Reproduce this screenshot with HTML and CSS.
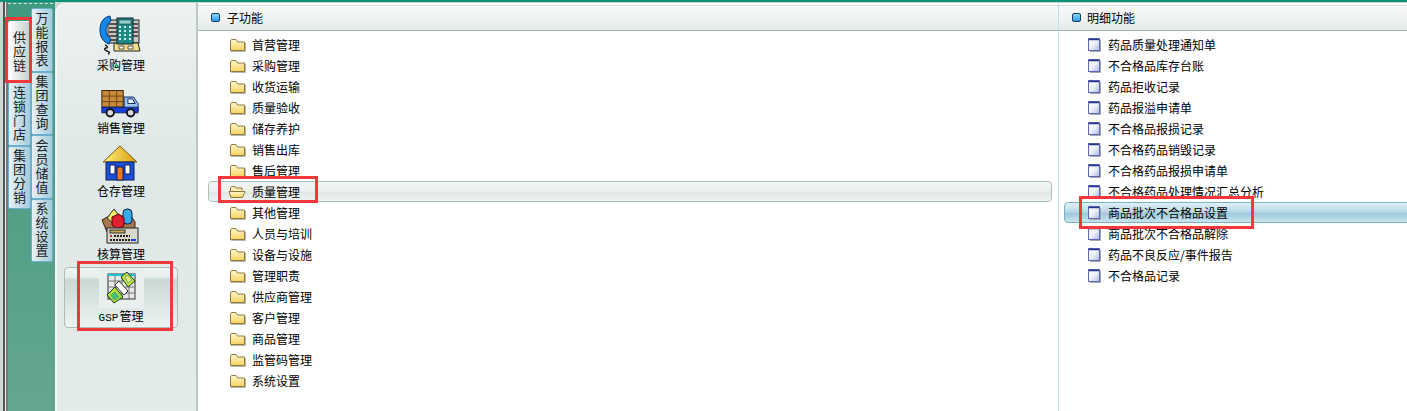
FILE: index.html
```html
<!DOCTYPE html>
<html lang="zh-CN">
<head>
    <meta charset="UTF-8">
    <title>GSP管理</title>
    <link rel="stylesheet" href="styles.css">
</head>
<body>

    <svg class="defs" width="0" height="0">
        <defs>
            <linearGradient id="gFolder" x1="0" y1="0" x2="0" y2="1">
                <stop offset="0" stop-color="#fff9cf"/>
                <stop offset="1" stop-color="#f6d260"/>
            </linearGradient>
            <linearGradient id="gDoc" x1="0" y1="0" x2="1" y2="1">
                <stop offset="0" stop-color="#ffffff"/>
                <stop offset=".5" stop-color="#eef1fb"/>
                <stop offset="1" stop-color="#a8b6ea"/>
            </linearGradient>
            <linearGradient id="gRoof" x1="0" y1="0" x2="1" y2="0">
                <stop offset="0" stop-color="#fff27a"/>
                <stop offset="1" stop-color="#d99a10"/>
            </linearGradient>
            <symbol id="folder" viewBox="0 0 16 14">
                <path d="M.5 3V12.5H14.5V4H7.5L6 1.5H1.5Z" fill="url(#gFolder)" stroke="#8f7a3c"/>
                <path d="M1 13.5H15.5V5" fill="none" stroke="#8c8778" stroke-opacity=".6"/>
            </symbol>
            <symbol id="folderOpen" viewBox="0 0 18 14">
                <path d="M2.5 11V2.5L3.5 1.5H7L8 3H14V5.5" fill="#fbeeb0" stroke="#8f7a3c"/>
                <path d="M1 6.5H17L14.5 12.5H3Z" fill="url(#gFolder)" stroke="#8f7a3c"/>
            </symbol>
            <symbol id="doc" viewBox="0 0 13 14">
                <rect x=".5" y=".5" width="11" height="12" fill="url(#gDoc)" stroke="#5f68b4"/>
                <path d="M1 1.5H11" stroke="#26348c" stroke-width="1.5"/>
                <path d="M12.5 2V13.5H2" fill="none" stroke="#a8a8b0"/>
            </symbol>
        </defs>
    </svg>

    <div class="app">
        <div class="tabs">
            <div class="tab-wrap">
                <div class="tab-col tab-col-a">
                    <div class="tab tab-on">供应链</div>
                    <div class="tab">连锁门店</div>
                    <div class="tab">集团分销</div>
                </div>
                <div class="tab-col tab-col-b">
                    <div class="tab">万能报表</div>
                    <div class="tab">集团查询</div>
                    <div class="tab">会员储值</div>
                    <div class="tab">系统设置</div>
                </div>
            </div>
        </div>

        <div class="main">
            <div class="side">
                <div class="mod">
                    <svg class="mod-icon" width="42" height="40" viewBox="0 0 42 40">
                        <rect x="9" y="5" width="31" height="23" fill="#c8c8c0" stroke="#222"/>
                        <path d="M10 9h9M10 13h9M10 17h9M10 21h9M10 25h9M31 9h8M31 13h8M31 17h8M31 21h8" stroke="#555" stroke-width="2"/>
                        <path d="M15 28H39L41 36H15Z" fill="#f5e08a" stroke="#222"/>
                        <path d="M20 31h5v3h-5zM29 31h5v3h-5z" fill="#fff" stroke="#554"/>
                        <rect x="18" y="3" width="16" height="26" fill="#1f8a86" stroke="#123"/>
                        <rect x="20" y="5" width="12" height="4" fill="#8fd0c8" stroke="#123" stroke-width=".5"/>
                        <path d="M20 12h2M25 12h2M30 12h2M20 16h2M25 16h2M30 16h2M20 20h2M25 20h2M30 20h2M20 24h2M25 24h2M30 24h2" stroke="#cdeee8" stroke-width="2"/>
                        <path d="M11 1C4 2 1 8 1 15S4 27 10 29L12 24C9 22 7 19 7 15S9 8 12 6Z" fill="#1488e8" stroke="#06357a"/>
                        <path d="M6 30c3 1 3 3 1 3s-2 2 1 3 3 2 1 3" fill="none" stroke="#222" stroke-width="1.5"/>
                    </svg>
                    <span class="mod-name">采购管理</span>
                </div>
                <div class="mod">
                    <svg class="mod-icon" width="39" height="29" viewBox="0 0 42 30">
                        <rect x="2" y="1" width="23" height="18" fill="#c98a3a" stroke="#2a1a08"/>
                        <path d="M2 7H25M2 13H25M10 1V19M18 1V19" stroke="#6a4214"/>
                        <path d="M26 8H36L41 15V23H26Z" fill="#9cc8f0" stroke="#0a1a60"/>
                        <path d="M30 10H35L38 15H30Z" fill="#e8f4ff" stroke="#0a1a60"/>
                        <path d="M2 19H41V25H2Z" fill="#1a3fd8" stroke="#0a1a60"/>
                        <circle cx="11" cy="25" r="4" fill="#d8d8d8" stroke="#111" stroke-width="2"/>
                        <circle cx="33" cy="25" r="4" fill="#d8d8d8" stroke="#111" stroke-width="2"/>
                    </svg>
                    <span class="mod-name">销售管理</span>
                </div>
                <div class="mod">
                    <svg class="mod-icon" width="36" height="36" viewBox="0 0 36 36">
                        <path d="M18 1L35 17H1Z" fill="url(#gRoof)" stroke="#7a5a10"/>
                        <rect x="4" y="17" width="28" height="18" fill="#1c50d8" stroke="#0a1a60"/>
                        <rect x="8" y="20" width="5" height="9" fill="#fff" stroke="#0a1a60"/>
                        <rect x="23" y="20" width="5" height="9" fill="#fff" stroke="#0a1a60"/>
                        <rect x="15" y="22" width="6" height="13" fill="#f07a18" stroke="#0a1a60"/>
                    </svg>
                    <span class="mod-name">仓存管理</span>
                </div>
                <div class="mod">
                    <svg class="mod-icon" width="38" height="36" viewBox="0 0 38 36">
                        <path d="M1 12L8 8L30 8L34 14V24H6Z" fill="#a8764e" stroke="#3a2210"/>
                        <path d="M6 10L13 1L19 9L13 16Z" fill="#f4ec60" stroke="#333"/>
                        <rect x="22" y="1" width="9" height="15" rx="4" fill="#38a8e8" stroke="#124"/>
                        <path d="M11 9L18 6L23 10V18L16 21L11 17Z" fill="#e02030" stroke="#501"/>
                        <rect x="6" y="20" width="31" height="15" fill="#d8d8cc" stroke="#222"/>
                        <rect x="9" y="22" width="15" height="3" fill="#c8a850" stroke="#333"/>
                        <path d="M9 28h2" stroke="#d22" stroke-width="2"/>
                        <path d="M13 28h16M9 32h20" stroke="#222" stroke-width="2" stroke-dasharray="2 1"/>
                        <path d="M30 32h5" stroke="#1a3fd8" stroke-width="2"/>
                    </svg>
                    <span class="mod-name">核算管理</span>
                </div>
                <div class="mod mod-on">
                    <div class="mod-glow">
                        <svg width="30" height="32" viewBox="0 0 30 32">
                            <rect x="2" y="2" width="27" height="25" fill="#e8e8e8" stroke="#333"/>
                            <path d="M2 3H29" stroke="#18c8d8" stroke-width="2"/>
                            <path d="M2 9H29M2 15H29M2 21H29M9 3V27M16 3V27M23 3V27" stroke="#777"/>
                            <path d="M15 5L21 0L29 9L22 15Z" fill="#c8e040" stroke="#142"/>
                            <path d="M19 5L22 3L26 8L22 11Z" fill="#f0f070" stroke="#5a8"/>
                            <path d="M1 23L9 15L17 25L8 31Z" fill="#b8dc30" stroke="#142"/>
                            <path d="M5 23L9 20L13 25L8 28Z" fill="#40c070" stroke="#5a8"/>
                            <path d="M9 13L13 9L22 19L18 23Z" fill="#fff" stroke="#333"/>
                        </svg>
                    </div>
                    <span class="mod-name"><span class="latin">GSP</span>管理</span>
                </div>
            </div>

            <div class="panel panel-sub">
                <div class="panel-head"><i class="dot"></i>子功能</div>
                <ul class="rows">
                    <li class="row"><svg class="ic-folder"><use href="#folder"/></svg>首营管理</li>
                    <li class="row"><svg class="ic-folder"><use href="#folder"/></svg>采购管理</li>
                    <li class="row"><svg class="ic-folder"><use href="#folder"/></svg>收货运输</li>
                    <li class="row"><svg class="ic-folder"><use href="#folder"/></svg>质量验收</li>
                    <li class="row"><svg class="ic-folder"><use href="#folder"/></svg>储存养护</li>
                    <li class="row"><svg class="ic-folder"><use href="#folder"/></svg>销售出库</li>
                    <li class="row"><svg class="ic-folder"><use href="#folder"/></svg>售后管理</li>
                    <li class="row row-on"><svg class="ic-open"><use href="#folderOpen"/></svg>质量管理</li>
                    <li class="row"><svg class="ic-folder"><use href="#folder"/></svg>其他管理</li>
                    <li class="row"><svg class="ic-folder"><use href="#folder"/></svg>人员与培训</li>
                    <li class="row"><svg class="ic-folder"><use href="#folder"/></svg>设备与设施</li>
                    <li class="row"><svg class="ic-folder"><use href="#folder"/></svg>管理职责</li>
                    <li class="row"><svg class="ic-folder"><use href="#folder"/></svg>供应商管理</li>
                    <li class="row"><svg class="ic-folder"><use href="#folder"/></svg>客户管理</li>
                    <li class="row"><svg class="ic-folder"><use href="#folder"/></svg>商品管理</li>
                    <li class="row"><svg class="ic-folder"><use href="#folder"/></svg>监管码管理</li>
                    <li class="row"><svg class="ic-folder"><use href="#folder"/></svg>系统设置</li>
                </ul>
            </div>

            <div class="panel panel-detail">
                <div class="panel-head"><i class="dot"></i>明细功能</div>
                <ul class="rows">
                    <li class="row"><svg class="ic-doc"><use href="#doc"/></svg>药品质量处理通知单</li>
                    <li class="row"><svg class="ic-doc"><use href="#doc"/></svg>不合格品库存台账</li>
                    <li class="row"><svg class="ic-doc"><use href="#doc"/></svg>药品拒收记录</li>
                    <li class="row"><svg class="ic-doc"><use href="#doc"/></svg>药品报溢申请单</li>
                    <li class="row"><svg class="ic-doc"><use href="#doc"/></svg>不合格品报损记录</li>
                    <li class="row"><svg class="ic-doc"><use href="#doc"/></svg>不合格药品销毁记录</li>
                    <li class="row"><svg class="ic-doc"><use href="#doc"/></svg>不合格药品报损申请单</li>
                    <li class="row"><svg class="ic-doc"><use href="#doc"/></svg>不合格药品处理情况汇总分析</li>
                    <li class="row row-blue"><svg class="ic-doc"><use href="#doc"/></svg>商品批次不合格品设置</li>
                    <li class="row"><svg class="ic-doc"><use href="#doc"/></svg>商品批次不合格品解除</li>
                    <li class="row"><svg class="ic-doc"><use href="#doc"/></svg>药品不良反应/事件报告</li>
                    <li class="row"><svg class="ic-doc"><use href="#doc"/></svg>不合格品记录</li>
                </ul>
            </div>
        </div>
    </div>

    <!-- red annotation boxes drawn on top of the screenshot -->
    <div class="mark mark-tab"></div>
    <div class="mark mark-gsp"></div>
    <div class="mark mark-sub"></div>
    <div class="mark mark-detail"></div>

</body>
</html>
```

FILE: styles.css
```css
* {
    box-sizing: border-box;
}
html, body {
    margin: 0;
    height: 411px;
    overflow: hidden;
}
body {
    position: relative;
    font-family: "Noto Sans CJK SC", "Liberation Sans", sans-serif;
    font-size: 12px;
    color: #000;
    background-color: #0e8f78;
}
.defs {
    position: absolute;
}
.app {
    display: flex;
    height: 409px;
    margin-top: 2px;
    background-color: #c9d6d3;
}
.tabs {
    flex-shrink: 0;
    width: 55px;
    padding: 1px 2px 0 8px;
    background: linear-gradient(to right, #cfd6d2 0, #cfd6d2 3px, #555 3px, #555 5px, #eceeee 5px, #eceeee 6px, #777 6px, #777 8px, transparent 8px),
                linear-gradient(#3f9a80, #65a68f);
}
.tab-wrap {
    display: flex;
    height: 100%;
    border-top: 1px dashed #d5e5dc;
}
.tab-col {
    display: flex;
    flex-direction: column;
}
.tab-col-a {
    width: 23px;
    padding-top: 17px;
}
.tab-col-b {
    width: 22px;
    padding-top: 4px;
}
.tab {
    display: flex;
    align-items: center;
    justify-content: center;
    height: 63.5px;
    writing-mode: vertical-rl;
    font-size: 13px;
    line-height: 1;
    letter-spacing: 1px;
    border: 1px solid #6aaed0;
    border-radius: 2px;
    background: linear-gradient(to right, #e6f1f5, #a4cbdb);
    color: #222;
}
.tab-on {
    height: 61px;
    border-color: #f4f4f4;
    background: linear-gradient(to right, #ffffff, #c4cccc);
}
.main {
    display: flex;
    flex: 1;
    min-width: 0;
    margin-top: 1px;
    border-left: 2px solid #f6f9f8;
    border-top-left-radius: 10px;
    background-color: #fff;
    overflow: hidden;
}
.side {
    width: 141px;
    flex-shrink: 0;
    padding: 7px 18px 0 7px;
    background: linear-gradient(#edf2f1, #dee8e6 40%, #e4ecea);
    border-right: 2px solid #bcc8c4;
}
.mod {
    display: flex;
    flex-direction: column;
    align-items: center;
    justify-content: flex-end;
    height: 63px;
}
.mod-icon {
    flex-shrink: 0;
    margin-right: 3px;
    margin-bottom: 2px;
}
.mod-name {
    height: 16px;
    line-height: 16px;
}
.latin {
    font-family: "Liberation Mono", monospace;
    font-size: 11px;
    margin-right: 1px;
}
.mod-on {
    height: 61px;
    margin-top: 5px;
    padding-bottom: 3px;
    border: 1px solid #a9bdb9;
    border-radius: 4px;
    background: linear-gradient(#f0f4f3, #e6eeec 16%, #c9d8d5 20%, #dbe6e4 60%, #eef3f2);
}
.mod-glow {
    display: flex;
    justify-content: center;
    align-items: center;
    width: 45px;
    height: 41px;
    background-color: #e9efee;
}
.panel {
    display: flex;
    flex-direction: column;
}
.panel-sub {
    flex: 1;
    min-width: 0;
}
.panel-detail {
    width: 349px;
    flex-shrink: 0;
    border-left: 1px solid #bfe0e8;
}
.panel-head {
    display: flex;
    align-items: center;
    height: 26px;
    margin-top: 2px;
    padding: 0 0 2px 13px;
    border-top: 1px solid #d5dedb;
    background: linear-gradient(#f7f9f8, #e6ecea);
    box-shadow: inset 0 -1px 0 #9db3ae;
}
.dot {
    width: 9px;
    height: 9px;
    margin-right: 7px;
    border: 1px solid #1c3c5c;
    border-radius: 2px;
    background: linear-gradient(#8ad4ff, #2a9cf0);
}
.panel-detail .dot {
    margin-right: 6px;
}
.rows {
    list-style-type: none;
    margin: 0;
    padding: 3px 6px 0 10px;
}
.panel-detail .rows {
    padding: 3px 0 0 5px;
}
.row {
    display: flex;
    align-items: center;
    height: 21px;
    padding-left: 21px;
    white-space: nowrap;
    border: 1px solid transparent;
}
.panel-detail .row {
    padding-left: 23px;
}
.row svg {
    flex-shrink: 0;
    margin-right: 6px;
}
.ic-folder {
    width: 16px;
    height: 14px;
}
.ic-open {
    width: 18px;
    height: 14px;
    margin-left: -2px;
}
.panel-detail .row .ic-doc {
    width: 13px;
    height: 14px;
    margin-right: 7px;
}
.row-on {
    border-color: #a9c0bc;
    border-radius: 4px;
    background: linear-gradient(#f4f6f5, #e9efed 50%, #e0e8e6 55%, #eef2f1);
}
.row-blue {
    margin-right: -4px;
    border-color: #7db0c4;
    border-radius: 4px;
    background: linear-gradient(#e0f0f6, #b8dbe8 45%, #9ccbdd 55%, #c8e4ee);
}
.mark {
    position: absolute;
    border: 3px solid #f4373a;
}
.mark-tab {
    left: 5px;
    top: 17px;
    width: 27px;
    height: 66px;
}
.mark-gsp {
    left: 77px;
    top: 261px;
    width: 96px;
    height: 70px;
}
.mark-sub {
    left: 218px;
    top: 176px;
    width: 100px;
    height: 27px;
}
.mark-detail {
    left: 1079px;
    top: 196px;
    width: 175px;
    height: 33px;
}
```
